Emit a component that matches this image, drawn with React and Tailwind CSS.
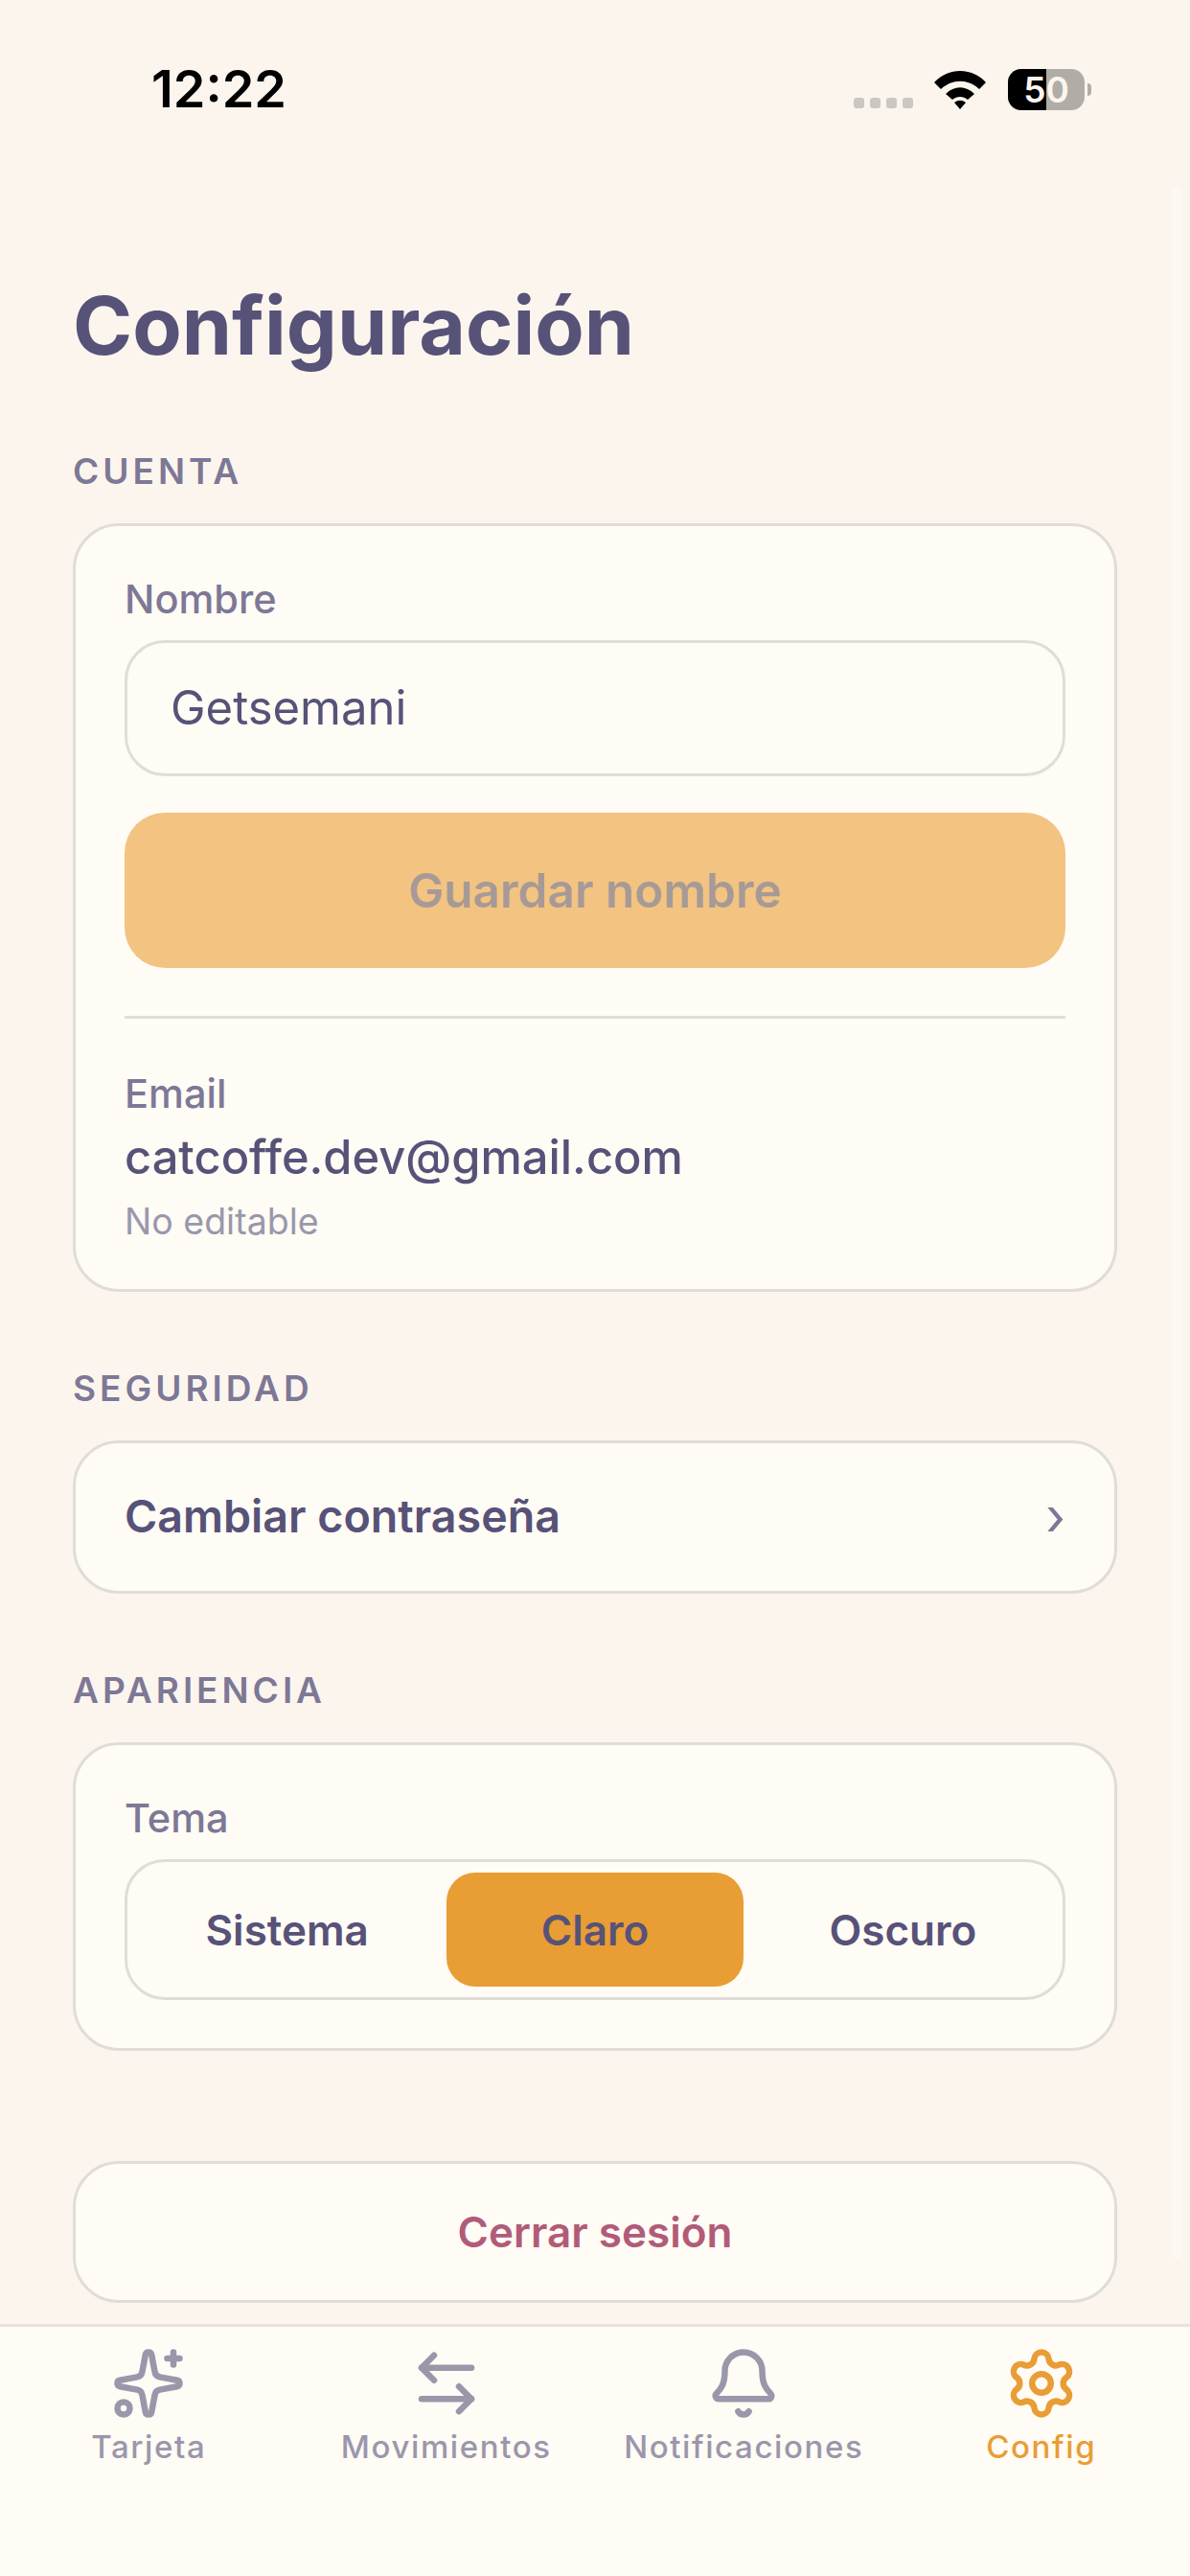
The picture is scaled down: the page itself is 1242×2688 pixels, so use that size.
import { Sparkles, ArrowLeftRight, Bell, Settings } from "lucide-react";

const tabs = [
    { label: "Tarjeta", icon: Sparkles },
    { label: "Movimientos", icon: ArrowLeftRight },
    { label: "Notificaciones", icon: Bell },
    { label: "Config", icon: Settings, active: true },
];

function StatusBar() {
    return (
        <div className="flex h-[132px] justify-between pl-[158px] pr-[103px] pt-[60px]">
            <span className="text-[54px] leading-[66px] font-semibold text-black">12:22</span>
            <div className="flex h-[46px] items-end mt-[9px]">
                <div className="flex gap-[6px] mb-[2px]">
                    <span className="w-[11px] h-[11px] rounded-[3px] bg-[#cbc7c1]" />
                    <span className="w-[11px] h-[11px] rounded-[3px] bg-[#cbc7c1]" />
                    <span className="w-[11px] h-[11px] rounded-[3px] bg-[#cbc7c1]" />
                    <span className="w-[11px] h-[11px] rounded-[3px] bg-[#cbc7c1]" />
                </div>
                <svg className="ml-[22px] mb-[1px]" width="54" height="40" viewBox="0 0 54 40">
                    <path d="M0 12 C15 -4 39 -4 54 12 L47 19 C35 8 19 8 7 19 Z" fill="#000" />
                    <path d="M12 24 C21 15 33 15 42 24 L35 30 C30 26 24 26 19 30 Z" fill="#000" />
                    <path d="M21 33 C25 30 29 30 33 33 L27 40 Z" fill="#000" />
                </svg>
                <div className="relative ml-[23px] w-[80px] h-[43px] rounded-[14px] overflow-hidden bg-[#b0ada7]">
                    <div className="h-full w-[40px] bg-black" />
                    <span className="absolute inset-0 flex items-center justify-center text-[37px] leading-none font-semibold text-[#fcf5ee]">50</span>
                </div>
                <div className="ml-[3px] w-[4px] h-[13px] mb-[15px] rounded-r-full bg-[#b0ada7]" />
            </div>
        </div>
    );
}

function SectionLabel({ children }) {
    return (
        <h2 className="h-[48px] text-[37px] leading-[48px] font-semibold tracking-[4px] text-[#7d7896]">{children}</h2>
    );
}

function FieldLabel({ children }) {
    return <p className="h-[48px] text-[41.5px] leading-[48px] font-medium text-[#7d7896]">{children}</p>;
}

export default function App() {
    return (
        <div className="relative flex flex-col h-[2688px] overflow-hidden bg-[#fcf5ee] font-['Inter',sans-serif] text-[#575278]">
            <StatusBar />

            {/* indicador de scroll */}
            <div className="absolute top-[194px] right-[9px] w-[10px] h-[2163px] rounded-full bg-[#fdf8f4]" />

            <main className="relative flex-1 px-[76px]">
                <h1 className="mt-[158px] h-[100px] text-[84px] leading-[100px] font-bold">Configuración</h1>

                <div className="mt-[78px]">
                    <SectionLabel>CUENTA</SectionLabel>
                </div>
                <section className="mt-[30px] h-[802px] rounded-[48px] border-[3px] border-[#e0dcd8] bg-[#fffbf5] px-[51px] pt-[52px]">
                    <FieldLabel>Nombre</FieldLabel>
                    <div className="mt-[19px] flex items-center h-[142px] rounded-[42px] border-[3px] border-[#e0dcd8] px-[45px] text-[49px]">
                        Getsemani
                    </div>
                    <button className="mt-[38px] w-full h-[162px] rounded-[42px] bg-[#f2c381] text-[49.5px] font-semibold text-[#a79a96]">
                        Guardar nombre
                    </button>
                    <div className="mt-[50px] h-[3px] bg-[#e0dcd8]" />
                    <div className="mt-[54px]">
                        <FieldLabel>Email</FieldLabel>
                    </div>
                    <p className="mt-[10px] h-[66px] text-[48.8px] leading-[66px] font-medium">catcoffe.dev@gmail.com</p>
                    <p className="mt-[10px] h-[48px] text-[37.5px] leading-[48px] text-[#9a97ab]">No editable</p>
                </section>

                <div className="mt-[77px]">
                    <SectionLabel>SEGURIDAD</SectionLabel>
                </div>
                <section className="mt-[30px] flex items-center justify-between h-[160px] rounded-[48px] border-[3px] border-[#e0dcd8] bg-[#fffbf5] pl-[51px] pr-[51px]">
                    <span className="text-[46.6px] font-semibold">Cambiar contraseña</span>
                    <span className="text-[54px] leading-none text-[#7d7896]">›</span>
                </section>

                <div className="mt-[77px]">
                    <SectionLabel>APARIENCIA</SectionLabel>
                </div>
                <section className="mt-[30px] h-[322px] rounded-[48px] border-[3px] border-[#e0dcd8] bg-[#fffbf5] px-[51px] pt-[52px]">
                    <FieldLabel>Tema</FieldLabel>
                    <div className="mt-[19px] grid grid-cols-3 gap-[12px] h-[147px] rounded-[42px] border-[3px] border-[#e0dcd8] px-[12px] py-[11px] text-[44px] font-semibold">
                        <div className="flex items-center justify-center">Sistema</div>
                        <div className="flex items-center justify-center rounded-[30px] bg-[#e99d35]">Claro</div>
                        <div className="flex items-center justify-center">Oscuro</div>
                    </div>
                </section>

                <button className="mt-[115px] w-full h-[148px] rounded-[48px] border-[3px] border-[#e0dcd8] bg-[#fffbf5] text-[44px] font-semibold text-[#b05c78]">
                    Cerrar sesión
                </button>
            </main>

            <nav className="relative grid grid-cols-4 h-[263px] border-t-[3px] border-[#e8e3de] bg-[#fffbf5] pt-[20px]">
                {tabs.map((tab) => {
                    const Icon = tab.icon;
                    return (
                        <div
                            key={tab.label}
                            className={`flex flex-col items-center ${tab.active ? "text-[#e99d35]" : "text-[#9a97ab]"}`}
                        >
                            <Icon size={78} strokeWidth={2} />
                            <span className="mt-[5px] text-[33px] leading-[44px] font-medium tracking-[1.6px]">{tab.label}</span>
                        </div>
                    );
                })}
            </nav>
        </div>
    );
}
